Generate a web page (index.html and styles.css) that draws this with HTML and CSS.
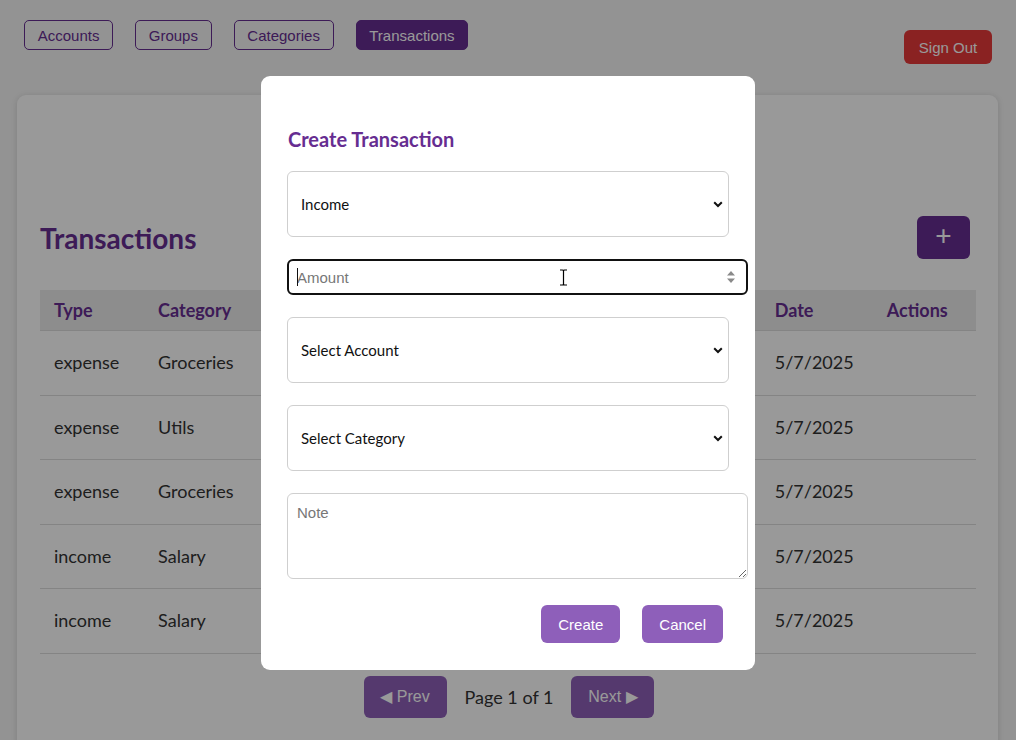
FILE: index.html
```html
<!DOCTYPE html>
<html lang="en">
<head>
<meta charset="utf-8">
<title>Transactions</title>
<link rel="stylesheet" href="styles.css">
</head>
<body>
<div class="page">
  <header class="topbar">
    <nav class="nav">
      <button class="nav-btn">Accounts</button>
      <button class="nav-btn">Groups</button>
      <button class="nav-btn">Categories</button>
      <button class="nav-btn active">Transactions</button>
    </nav>
    <button class="signout">Sign Out</button>
  </header>

  <main class="card">
    <div class="card-head">
      <h2 class="title">Transactions</h2>
      <button class="add-btn">+</button>
    </div>
    <table class="tx-table">
      <colgroup>
        <col class="c-type"><col class="c-cat"><col class="c-mid"><col class="c-mid"><col class="c-mid"><col class="c-date"><col class="c-act">
      </colgroup>
      <thead>
        <tr><th>Type</th><th>Category</th><th>Account</th><th>Amount</th><th>Note</th><th>Date</th><th>Actions</th></tr>
      </thead>
      <tbody>
        <tr><td>expense</td><td>Groceries</td><td>Cash</td><td>20</td><td></td><td>5/7/2025</td><td></td></tr>
        <tr><td>expense</td><td>Utils</td><td>Cash</td><td>50</td><td></td><td>5/7/2025</td><td></td></tr>
        <tr><td>expense</td><td>Groceries</td><td>Cash</td><td>15</td><td></td><td>5/7/2025</td><td></td></tr>
        <tr><td>income</td><td>Salary</td><td>Bank</td><td>1000</td><td></td><td>5/7/2025</td><td></td></tr>
        <tr><td>income</td><td>Salary</td><td>Bank</td><td>1000</td><td></td><td>5/7/2025</td><td></td></tr>
      </tbody>
    </table>
    <div class="pager">
      <button class="pg-btn">◀ Prev</button>
      <span class="pg-text">Page 1 of 1</span>
      <button class="pg-btn">Next ▶</button>
    </div>
  </main>
</div>

<div class="overlay">
  <div class="modal">
    <h3 class="modal-title">Create Transaction</h3>
    <div class="form">
      <div class="select-wrap">
        <select class="field-select">
          <option>Income</option>
          <option>Expense</option>
        </select>
        <svg class="chev" width="10" height="7" viewBox="0 0 10 7"><path d="M1.2 1.2 L5 5 L8.8 1.2" fill="none" stroke="#111" stroke-width="2"/></svg>
      </div>
      <div class="input-wrap">
        <input class="field-input focused" type="text" placeholder="Amount">
        <span class="caret"></span>
        <svg class="spin" width="10" height="16" viewBox="0 0 10 16"><path d="M1 6.5 L5 2 L9 6.5 Z M1 9.5 L5 14 L9 9.5 Z" fill="#8a8a8a"/></svg>
        <svg class="ibeam" width="9" height="17" viewBox="0 0 9 17"><path d="M1 1 H3.5 Q4.5 1 4.5 2 Q4.5 1 5.5 1 H8 M4.5 2 V15 M1 16 H3.5 Q4.5 16 4.5 15 Q4.5 16 5.5 16 H8" fill="none" stroke="#000" stroke-width="1.2"/></svg>
      </div>
      <div class="select-wrap">
        <select class="field-select">
          <option>Select Account</option>
        </select>
        <svg class="chev" width="10" height="7" viewBox="0 0 10 7"><path d="M1.2 1.2 L5 5 L8.8 1.2" fill="none" stroke="#111" stroke-width="2"/></svg>
      </div>
      <div class="select-wrap">
        <select class="field-select">
          <option>Select Category</option>
        </select>
        <svg class="chev" width="10" height="7" viewBox="0 0 10 7"><path d="M1.2 1.2 L5 5 L8.8 1.2" fill="none" stroke="#111" stroke-width="2"/></svg>
      </div>
      <textarea class="field-note" placeholder="Note"></textarea>
    </div>
    <div class="actions">
      <button class="m-btn">Create</button>
      <button class="m-btn">Cancel</button>
    </div>
  </div>
</div>
</body>
</html>
```

FILE: styles.css
```css
* { box-sizing: border-box; }

html, body {
  margin: 0;
  height: 100%;
  overflow: hidden;
}

body {
  background: #f5f5f5;
  font-family: Lato, "Open Sans", sans-serif;
  color: #333;
}

.page {
  padding: 0 18px 0 17px;
}

.topbar {
  display: flex;
  justify-content: space-between;
  align-items: flex-start;
  padding: 20px 6px 0 7px;
  height: 95px;
}

.nav {
  display: flex;
  gap: 22px;
}

.nav-btn {
  font-family: "Liberation Sans", Arial, sans-serif;
  font-size: 15px;
  height: 30px;
  padding: 0 12.7px;
  border: 1px solid #662d91;
  border-radius: 5px;
  background: transparent;
  color: #662d91;
}

.nav-btn.active {
  background: #662d91;
  color: #fff;
}

.signout {
  margin-top: 10px;
  font-family: "Liberation Sans", Arial, sans-serif;
  font-size: 15px;
  height: 34px;
  width: 88px;
  border: none;
  border-radius: 6px;
  background: #e63939;
  color: #fff;
}

.card {
  background: #fff;
  border-radius: 9px;
  box-shadow: 0 1px 6px rgba(0, 0, 0, 0.14);
  padding: 121px 22px 40px 23px;
  height: 700px;
}

.card-head {
  display: flex;
  justify-content: space-between;
  align-items: center;
  padding-right: 6px;
}

.title {
  margin: 0;
  font-size: 28px;
  font-weight: 700;
  color: #662d91;
}

.add-btn {
  width: 53px;
  height: 43px;
  border: none;
  border-radius: 6px;
  background: #662d91;
  color: #fff;
  font-family: "Liberation Sans", Arial, sans-serif;
  font-size: 28px;
  line-height: 1;
  padding: 0 0 3px;
}

.tx-table {
  width: 100%;
  margin-top: 31px;
  border-collapse: collapse;
  table-layout: fixed;
  font-size: 18px;
}

.c-type { width: 104px; }
.c-cat { width: 154px; }
.c-mid { width: 154px; }
.c-date { width: 112px; }
.c-act { width: 103px; }

.tx-table th {
  background: #ececec;
  color: #662d91;
  font-weight: 700;
  text-align: left;
  padding: 8px 14px;
  line-height: 24px;
  border-bottom: 1px solid #dcdcdc;
}

.tx-table td {
  padding: 20px 14px;
  line-height: 23.6px;
  border-bottom: 1px solid #dcdcdc;
  color: #333;
  white-space: nowrap;
}

.pager {
  display: flex;
  justify-content: center;
  align-items: center;
  gap: 18px;
  margin-top: 22px;
  padding-left: 2px;
}

.pg-btn {
  width: 83px;
  height: 42px;
  border: none;
  border-radius: 6px;
  background: #8e60b8;
  color: #fff;
  font-family: "Liberation Sans", Arial, sans-serif;
  font-size: 16px;
}

.pg-text {
  font-size: 18px;
  color: #333;
}

.overlay {
  position: fixed;
  inset: 0;
  background: rgba(0, 0, 0, 0.4);
  display: flex;
  align-items: center;
  justify-content: center;
}

.modal {
  width: 494px;
  background: #fff;
  border-radius: 9px;
  padding: 26px 26px 27px;
  margin-top: 6px;
}

.modal-title {
  margin: 24px 0 19px 1px;
  font-size: 20px;
  line-height: 26px;
  font-weight: 700;
  color: #662d91;
}

.form {
  display: flex;
  flex-direction: column;
  gap: 22px;
}

.select-wrap {
  position: relative;
  width: 442px;
}

.field-select {
  appearance: none;
  -webkit-appearance: none;
  width: 442px;
  height: 66px;
  padding: 0 13px;
  border: 1px solid #cfcfcf;
  border-radius: 6px;
  background: #fff;
  font-family: Lato, "Open Sans", sans-serif;
  font-size: 15px;
  color: #111;
}

.chev {
  position: absolute;
  right: 6px;
  top: 30px;
}

.input-wrap {
  position: relative;
  width: 461px;
}

.field-input {
  width: 461px;
  height: 36px;
  padding: 0 8px;
  border: 2px solid #111;
  border-radius: 6px;
  outline: none;
  font-family: "Liberation Sans", Arial, sans-serif;
  font-size: 15px;
  color: #111;
}

.field-input::placeholder,
.field-note::placeholder {
  color: #777;
}

.caret {
  position: absolute;
  left: 10px;
  top: 9px;
  width: 1px;
  height: 18px;
  background: #111;
}

.spin {
  position: absolute;
  right: 12px;
  top: 10px;
}

.ibeam {
  position: absolute;
  left: 272px;
  top: 10px;
}

.field-note {
  width: 461px;
  height: 86px;
  padding: 10px 9px;
  border: 1px solid #cfcfcf;
  border-radius: 6px;
  font-family: "Liberation Sans", Arial, sans-serif;
  font-size: 15px;
  resize: vertical;
  display: block;
}

.actions {
  display: flex;
  justify-content: flex-end;
  gap: 22px;
  margin-top: 26px;
  padding-right: 6px;
}

.m-btn {
  height: 38px;
  padding: 0 17px;
  border: none;
  border-radius: 6px;
  background: #8e5fba;
  color: #fff;
  font-family: "Liberation Sans", Arial, sans-serif;
  font-size: 15px;
}
```
